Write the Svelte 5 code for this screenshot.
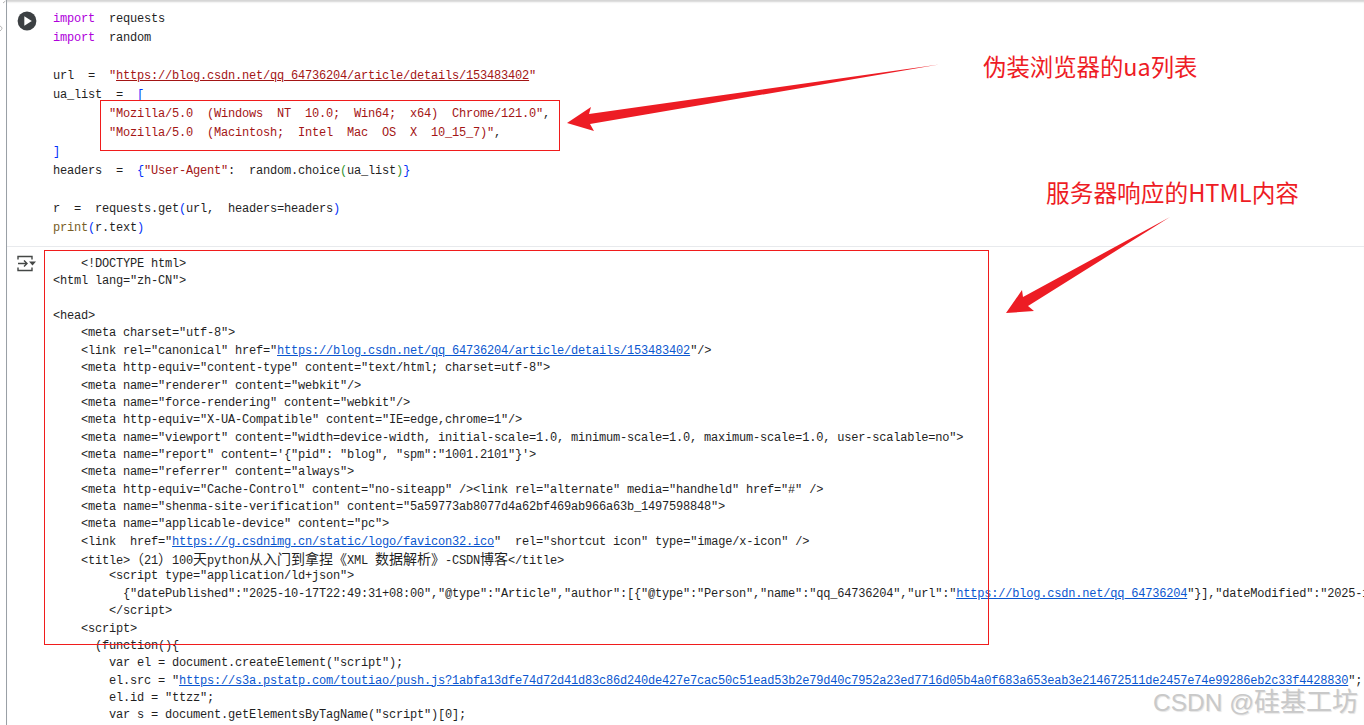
<script lang="ts">
  // one token per span: [text, class]
  type Tok = [string, string?];

  const cell: Tok[][] = [
    [['import', 'kw'], ['  requests']],
    [['import', 'kw'], ['  random']],
    [],
    [['url  =  '], ['"', 'str'], ['https://blog.csdn.net/qq_64736204/article/details/153483402', 'str ul'], ['"', 'str']],
    [['ua_list  =  '], ['[', 'br']],
    [['        '], ['"Mozilla/5.0  (Windows  NT  10.0;  Win64;  x64)  Chrome/121.0"', 'str'], [',']],
    [['        '], ['"Mozilla/5.0  (Macintosh;  Intel  Mac  OS  X  10_15_7)"', 'str'], [',']],
    [[']', 'br']],
    [['headers  =  '], ['{', 'br'], ['"User-Agent"', 'str'], [':  random.choice'], ['(', 'br2'], ['ua_list'], [')', 'br2'], ['}', 'br']],
    [],
    [['r  =  requests.get'], ['(', 'br'], ['url,  headers=headers'], [')', 'br']],
    [['print', 'fn'], ['(', 'br'], ['r.text'], [')', 'br']]
  ];

  const output: Tok[][] = [
    [['    <!DOCTYPE html>']],
    [['<html lang="zh-CN">']],
    [],
    [['<head>']],
    [['    <meta charset="utf-8">']],
    [['    <link rel="canonical" href="'], ['https://blog.csdn.net/qq_64736204/article/details/153483402', 'link'], ['"/>']],
    [['    <meta http-equiv="content-type" content="text/html; charset=utf-8">']],
    [['    <meta name="renderer" content="webkit"/>']],
    [['    <meta name="force-rendering" content="webkit"/>']],
    [['    <meta http-equiv="X-UA-Compatible" content="IE=edge,chrome=1"/>']],
    [['    <meta name="viewport" content="width=device-width, initial-scale=1.0, minimum-scale=1.0, maximum-scale=1.0, user-scalable=no">']],
    [['    <meta name="report" content=\'{"pid": "blog", "spm":"1001.2101"}\'>']],
    [['    <meta name="referrer" content="always">']],
    [['    <meta http-equiv="Cache-Control" content="no-siteapp" /><link rel="alternate" media="handheld" href="#" />']],
    [['    <meta name="shenma-site-verification" content="5a59773ab8077d4a62bf469ab966a63b_1497598848">']],
    [['    <meta name="applicable-device" content="pc">']],
    [['    <link  href="'], ['https://g.csdnimg.cn/static/logo/favicon32.ico', 'link'], ['"  rel="shortcut icon" type="image/x-icon" />']],
    [['    <title>'], ['（', 'cjk'], ['21'], ['）', 'cjk'], ['100'], ['天', 'cjk'], ['python'], ['从入门到拿捏《', 'cjk'], ['XML '], ['数据解析》', 'cjk'], ['-CSDN'], ['博客', 'cjk'], ['</title>']],
    [['        <script type="application/ld+json">']],
    [['          {"datePublished":"2025-10-17T22:49:31+08:00","@type":"Article","author":[{"@type":"Person","name":"qq_64736204","url":"'], ['https://blog.csdn.net/qq_64736204', 'link'], ['"}],"dateModified":"2025-10-17T22:49:31+08:00"']],
    [['        </' + 'script>']],
    [['    <script>']],
    [['      (function(){']],
    [['        var el = document.createElement("script");']],
    [['        el.src = "'], ['https://s3a.pstatp.com/toutiao/push.js?1abfa13dfe74d72d41d83c86d240de427e7cac50c51ead53b2e79d40c7952a23ed7716d05b4a0f683a653eab3e214672511de2457e74e99286eb2c33f4428830', 'link'], ['";']],
    [['        el.id = "ttzz";']],
    [['        var s = document.getElementsByTagName("script")[0];']]
  ];
</script>

{#snippet lines(rows: Tok[][], cls: string)}
  {#each rows as row}
    <div class={cls}>{#each row as t}<span class={t[1]}>{t[0]}</span>{/each}</div>
  {/each}
{/snippet}

<div class="page">
  <div class="notebook">
    <section class="code-cell">
      <div class="gutter">
        <svg class="run" width="20" height="20" viewBox="0 0 20 20">
          <circle cx="10" cy="10" r="9.4" fill="#3c4043" />
          <path d="M7.3 5.2 14.8 10 7.3 14.8Z" fill="#fff" />
        </svg>
      </div>
      <div class="source">{@render lines(cell, 'line')}</div>
    </section>

    <section class="output-cell">
      <div class="gutter">
        <svg class="out" width="20" height="18" viewBox="0 0 20 18" fill="none" stroke="#444746" stroke-width="1.4">
          <path d="M1 4.5V1.5H15V4.5M1 12.5V15.5H15V12.5" />
          <path d="M1 8.5H10M7 5.5 10 8.5 7 11.5" />
          <path d="M12 6.5H19L15.5 10.5Z" fill="#444746" stroke="none" />
        </svg>
      </div>
      <div class="result">{@render lines(output, 'oline')}</div>
    </section>
  </div>

  <!-- annotations drawn over the screenshot -->
  <div class="mark box-ua"></div>
  <div class="mark box-html"></div>
  <svg class="arrows" width="1364" height="725" viewBox="0 0 1364 725">
    <path d="M939 64.5 589 114 591 107 567 123 594 131 590 124Z" fill="#ed1c24" />
    <path d="M1170 217 1023 297 1022 290 1006 313 1034 311 1028 306Z" fill="#ed1c24" />
    <path d="M3 3 5.5 1M0 26Q4 28 0 31" fill="none" stroke="#b5b5b5" />
  </svg>
  <span class="note note-ua">伪装浏览器的ua列表</span>
  <span class="note note-html">服务器响应的HTML内容</span>
  <span class="watermark">CSDN @<span class="wm-cjk">硅基工坊</span></span>
</div>

<style>
  :global(body) {
    margin: 0;
    background: #fff;
  }

  .page {
    position: relative;
    width: 1364px;
    height: 725px;
    overflow: hidden;
    background: #fff;
  }

  .notebook {
    height: 725px;
    margin-left: 6px;
    padding-top: 3px;
    box-sizing: border-box;
    border-left: 1px solid #9aa0a6;
    box-shadow: inset 0 3px 2px -1px #d4d4d4;
    font-family: "Liberation Mono", "Noto Sans CJK SC", monospace;
    font-size: 12px;
    letter-spacing: -0.2px;
    color: #1f1f1f;
  }

  .code-cell,
  .output-cell {
    display: flex;
  }

  .code-cell {
    height: 244px;
    box-sizing: border-box;
    padding-top: 7px;
    border-bottom: 1px solid #e8eaed;
  }

  .output-cell {
    padding-top: 9px;
  }

  .gutter {
    flex: none;
    width: 46px;
  }

  .run {
    display: block;
    margin: 1px 0 0 10px;
  }

  .out {
    display: block;
    margin: -1px 0 0 10px;
  }

  .source,
  .result {
    white-space: pre;
    min-width: 0;
  }

  .line {
    height: 19px;
    line-height: 19px;
  }

  .oline {
    height: 17.37px;
    line-height: 17.37px;
  }

  .kw {
    color: #af00db;
  }

  .str {
    color: #a31515;
  }

  .ul {
    text-decoration: underline;
  }

  .br {
    color: #0431fa;
  }

  .br2 {
    color: #319331;
  }

  .fn {
    color: #795e26;
  }

  .link {
    color: #0b57d0;
    text-decoration: underline;
  }

  .cjk {
    font-family: "Noto Sans CJK SC", sans-serif;
    font-size: 14px;
    letter-spacing: 0;
    line-height: 1;
  }

  .mark {
    position: absolute;
    box-sizing: border-box;
    border: 1px solid #f01c1c;
  }

  .box-ua {
    left: 100px;
    top: 100px;
    width: 460px;
    height: 51px;
  }

  .box-html {
    left: 44px;
    top: 250px;
    width: 945px;
    height: 395px;
  }

  .arrows {
    position: absolute;
    left: 0;
    top: 0;
  }

  .note {
    position: absolute;
    font-family: "Noto Sans CJK SC", "Liberation Sans", sans-serif;
    font-size: 23.7px;
    font-weight: 400;
    line-height: 30px;
    color: #ee1c25;
    white-space: nowrap;
  }

  .note-ua {
    left: 983px;
    top: 51px;
    font-size: 23.4px;
  }

  .note-html {
    left: 1046px;
    top: 177px;
  }

  .watermark {
    position: absolute;
    left: 1153px;
    top: 686px;
    font-family: "Liberation Sans", "Noto Sans CJK SC", sans-serif;
    font-size: 24.5px;
    line-height: 32px;
    color: #c9c9c9;
    text-shadow: 1px 1px 1px #e4e4e4;
    white-space: nowrap;
  }

  .wm-cjk {
    font-size: 26px;
  }
</style>
